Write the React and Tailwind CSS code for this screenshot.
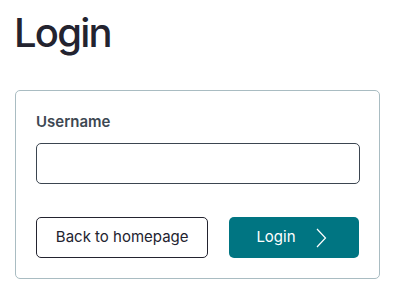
import { useState } from 'react';

export default function App() {
  const [username, setUsername] = useState('');

  return (
    <div className="min-h-screen bg-white px-[15px] pt-[9px] font-['Inter',sans-serif]">
      <h1 className="text-[40px] leading-[48px] font-medium tracking-[-0.045em] text-[#23232f] -ml-[1px]">
        Login
      </h1>

      <form className="mt-[33px] w-[365px] border border-[#a9bcc2] rounded-[5px] px-5 pt-[22px] pb-5">
        <label className="block text-[15px] leading-[18px] font-semibold text-[#3d4852]">
          Username
        </label>
        <input
          type="text"
          value={username}
          onChange={e => setUsername(e.target.value)}
          className="mt-[12px] block w-[324px] h-[41px] border border-[#3b4550] rounded-[5px] px-3 text-[15px] outline-none"
        />

        <div className="mt-[33px] flex gap-[21px]">
          <button
            type="button"
            className="w-[173px] h-[41px] border border-[#23232f] rounded-[5px] text-[15px] text-[#23232f] bg-white"
          >
            Back to homepage
          </button>
          <button
            type="submit"
            className="w-[130px] h-[41px] rounded-[5px] bg-[#007582] text-white text-[15px] flex items-center gap-[20px] pl-[27px]"
          >
            <span>Login</span>
            <svg width="11" height="20" viewBox="0 0 11 20" fill="none">
              <path d="M1 1l8.5 9L1 19" stroke="white" strokeWidth="1.2" />
            </svg>
          </button>
        </div>
      </form>
    </div>
  );
}
